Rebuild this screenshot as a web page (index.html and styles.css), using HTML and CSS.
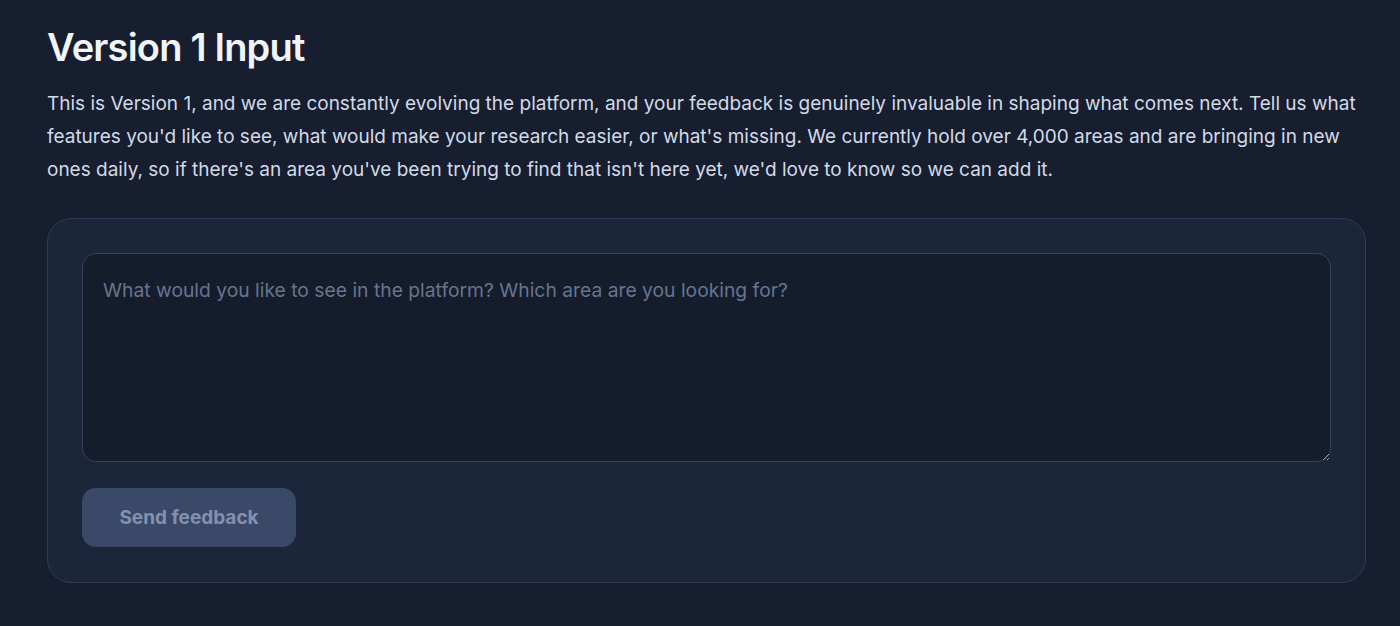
FILE: index.html
```html
<!DOCTYPE html>
<html lang="en">
<head>
<meta charset="utf-8">
<link rel="stylesheet" href="styles.css">
</head>
<body>
<main class="page">
  <h1 class="title">Version 1 Input</h1>
  <p class="intro">This is Version 1, and we are constantly evolving the platform, and your feedback is genuinely invaluable in shaping what comes next. Tell us what features you'd like to see, what would make your research easier, or what's missing. We currently hold over 4,000 areas and are bringing in new ones daily, so if there's an area you've been trying to find that isn't here yet, we'd love to know so we can add it.</p>
  <form class="card">
    <textarea class="field" placeholder="What would you like to see in the platform? Which area are you looking for?"></textarea>
    <div class="actions">
      <button type="button" class="send" disabled>Send feedback</button>
    </div>
  </form>
</main>
</body>
</html>
```
FILE: styles.css
```css
* { box-sizing: border-box; }
html, body { margin: 0; height: 100%; }
body {
  background: #161e2f;
  font-family: Inter, "Noto Sans", sans-serif;
  color: #d3dae6;
}
.page {
  padding: 24px 34px 0 47px;
}
.title {
  margin: 0;
  font-size: 38px;
  line-height: 46px;
  font-weight: 600;
  letter-spacing: -0.8px;
  color: #f1f4f9;
}
.intro {
  margin: 17px 0 0;
  font-size: 19px;
  line-height: 33px;
  color: #d3dae6;
}
.card {
  margin-top: 32px;
  background: #1b263a;
  border: 1px solid #2f3c54;
  border-radius: 24px;
  padding: 34px 34px 35px;
  display: flex;
  flex-direction: column;
  gap: 26px;
}
.field {
  display: block;
  width: 100%;
  height: 209px;
  background: #151c2c;
  border: 1px solid #34425c;
  border-radius: 14px;
  padding: 22px 20px;
  font-family: inherit;
  font-size: 19.3px;
  line-height: 28px;
  color: #d3dae6;
  resize: vertical;
  outline: none;
}
.field::placeholder { color: #66758f; }
.actions { display: flex; }
.send {
  width: 214px;
  height: 59px;
  border: none;
  border-radius: 14px;
  background: #3a4968;
  color: #8391ad;
  font-family: inherit;
  font-size: 19px;
  font-weight: 700;
  cursor: not-allowed;
}
```
